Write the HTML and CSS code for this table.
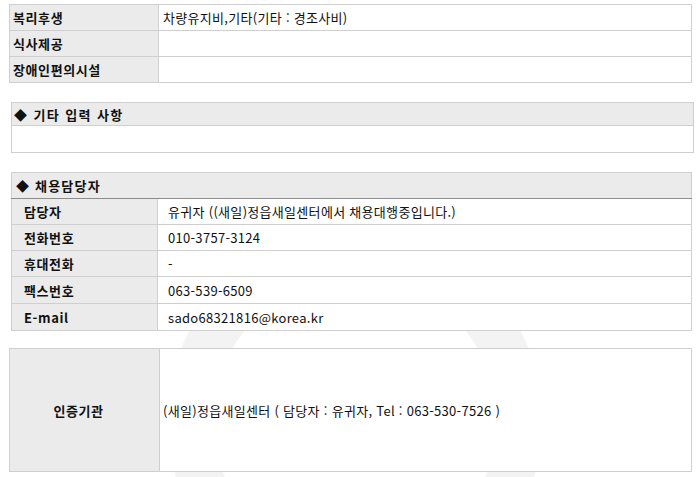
FILE: index.html
```html
<!DOCTYPE html>
<html lang="ko">
<head>
<meta charset="utf-8">
<link rel="stylesheet" href="styles.css">
</head>
<body>
<div class="page">
  <svg class="watermark" width="420" height="420" viewBox="0 0 420 420" aria-hidden="true">
    <circle cx="210" cy="210" r="165" fill="none" stroke="#f3f3f3" stroke-width="46"/>
  </svg>

  <table class="grid t1">
    <colgroup><col class="c-label"><col></colgroup>
    <tr class="r1"><th>복리후생</th><td>차량유지비,기타(기타 : 경조사비)</td></tr>
    <tr class="r1"><th>식사제공</th><td></td></tr>
    <tr class="r1"><th>장애인편의시설</th><td></td></tr>
  </table>

  <table class="grid t2">
    <tr><th class="head">◆ 기타 입력 사항</th></tr>
    <tr><td class="blank"></td></tr>
  </table>

  <table class="grid t3">
    <colgroup><col class="c-label"><col></colgroup>
    <tr><th class="head" colspan="2">◆ 채용담당자</th></tr>
    <tr><th>담당자</th><td>유귀자 ((새일)정읍새일센터에서 채용대행중입니다.)</td></tr>
    <tr><th>전화번호</th><td>010-3757-3124</td></tr>
    <tr><th>휴대전화</th><td>-</td></tr>
    <tr class="tall"><th>팩스번호</th><td>063-539-6509</td></tr>
    <tr class="tall"><th>E-mail</th><td>sado68321816@korea.kr</td></tr>
  </table>

  <table class="grid t4">
    <colgroup><col class="c-label"><col></colgroup>
    <tr><th>인증기관</th><td>(새일)정읍새일센터 ( 담당자 : 유귀자, Tel : 063-530-7526 )</td></tr>
  </table>
</div>
</body>
</html>
```

FILE: styles.css
```css
html, body {
  margin: 0;
  padding: 0;
  background: #fff;
}
body {
  font-family: "Noto Sans CJK KR", "Noto Sans", sans-serif;
  font-size: 13px;
  color: #111;
}
.page {
  position: relative;
  width: 700px;
  height: 477px;
  overflow: hidden;
  padding-top: 4px;
  box-sizing: border-box;
}
.watermark {
  position: absolute;
  left: 145px;
  top: 210px;
  z-index: 0;
}
.grid {
  position: relative;
  z-index: 1;
  border-collapse: collapse;
  background: #fff;
  table-layout: fixed;
}
.grid th, .grid td {
  border: 1px solid #cfcfcf;
  padding: 0;
  text-align: left;
  vertical-align: middle;
  line-height: 15px;
  background: #fff;
}
.grid td {
  letter-spacing: 0.3px;
}
.grid th {
  background: #ebebeb;
  font-weight: bold;
  font-size: 13px;
  letter-spacing: 0.6px;
}
.t1 {
  margin-left: 9px;
  width: 683px;
}
.t1 .c-label {
  width: 149px;
}
.t1 th {
  padding-left: 3px;
}
.t1 td {
  padding-left: 4px;
}
.t1 .r1 th, .t1 .r1 td {
  height: 25px;
}
.t2 {
  margin-left: 11px;
  margin-top: 19px;
  width: 683px;
}
.t2 .head {
  height: 22px;
  padding-left: 2px;
  letter-spacing: 1.4px;
}
.t2 .blank {
  height: 26px;
}
.t3 {
  margin-left: 11px;
  margin-top: 19px;
  width: 681px;
}
.t3 .c-label {
  width: 146px;
}
.t3 .head {
  height: 25px;
  padding-left: 4px;
  border-bottom-color: #8c8c8c;
  letter-spacing: 1.2px;
}
.t3 th:not(.head) {
  padding-left: 12px;
  height: 25px;
}
.t3 td {
  padding-left: 10px;
  height: 25px;
}
.t3 .tall th, .t3 .tall td {
  height: 26px;
}
.t4 {
  margin-left: 9px;
  margin-top: 17px;
  width: 683px;
}
.t4 .c-label {
  width: 150px;
}
.t4 th {
  height: 123px;
  text-align: center;
  padding-right: 12px;
  box-sizing: border-box;
}
.t4 td {
  padding-left: 3px;
}
```
